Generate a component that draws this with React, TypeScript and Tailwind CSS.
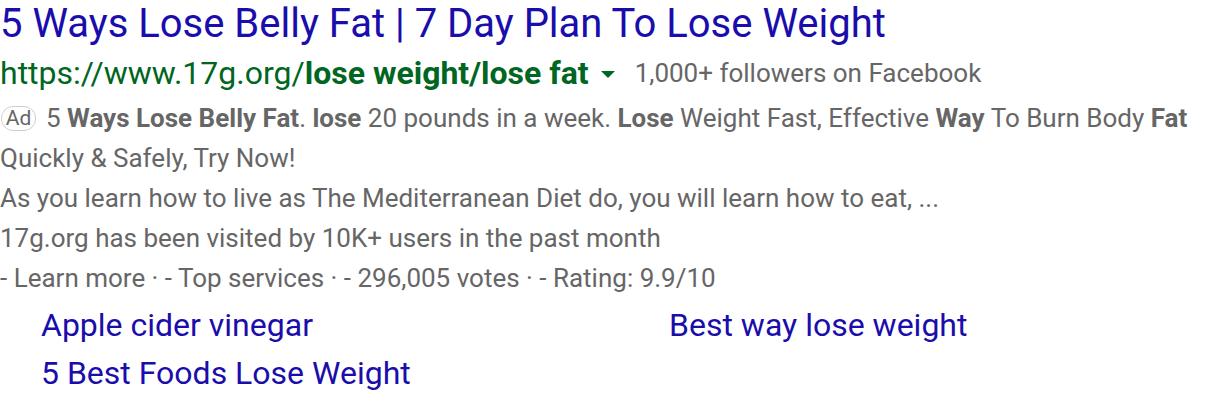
export default function App() {
  return (
    <div className="min-h-screen bg-white font-['Roboto',_'Liberation_Sans',_sans-serif]">
      <h3 className="text-[40px] leading-[48px] text-[#1a0dab]">
        5 Ways Lose Belly Fat | 7 Day Plan To Lose Weight
      </h3>
      <div className="flex items-center h-[50px] text-[32px] text-[#006621]">
        <span>
          https://www.17g.org/<b className="font-bold">lose weight/lose fat</b>
        </span>
        <span className="ml-[12px] mt-[2px] w-0 h-0 border-l-[7px] border-r-[7px] border-t-[7px] border-l-transparent border-r-transparent border-t-[#006621]" />
        <span className="ml-[20px] text-[26px] text-[#666666]">1,000+ followers on Facebook</span>
      </div>
      <div className="text-[26px] leading-[40px] text-[#666666]">
        <div>
          <span className="inline-block ml-[1px] mr-[10px] w-[35px] text-center leading-[23px] text-[21px] border border-[#cfcfcf] rounded-[12px] text-[#666666] align-[2px]">
            Ad
          </span>
          5 <b>Ways Lose Belly Fat</b>. <b>lose</b> 20 pounds in a week. <b>Lose</b> Weight Fast, Effective{" "}
          <b>Way</b> To Burn Body <b>Fat</b> Quickly &amp; Safely, Try Now!
        </div>
        <div>As you learn how to live as The Mediterranean Diet do, you will learn how to eat, ...</div>
        <div>17g.org has been visited by 10K+ users in the past month</div>
        <div>- Learn more · - Top services · - 296,005 votes · - Rating: 9.9/10</div>
      </div>
      <div className="grid grid-cols-[628px_1fr] pl-[41px] mt-[3px] text-[32px] leading-[48px] text-[#1a0dab]">
        <a>Apple cider vinegar</a>
        <a>Best way lose weight</a>
        <a>5 Best Foods Lose Weight</a>
      </div>
    </div>
  );
}
